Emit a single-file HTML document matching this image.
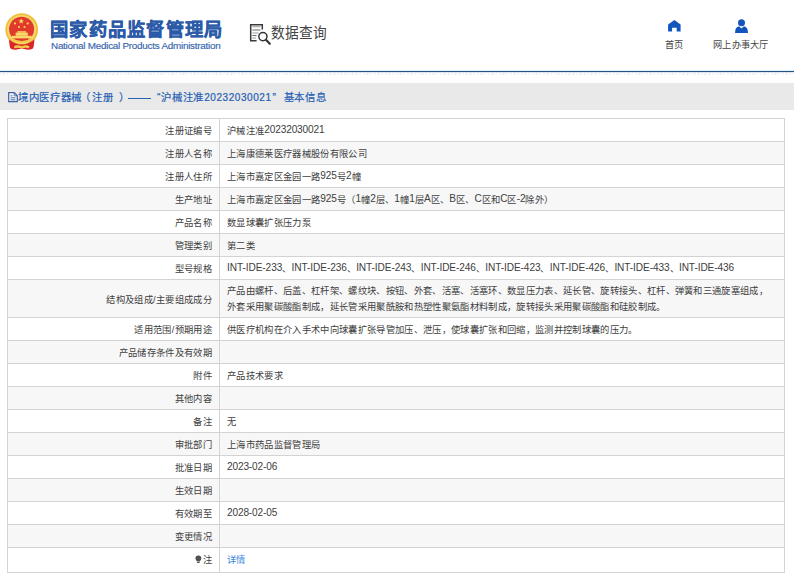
<!DOCTYPE html>
<html lang="zh-CN">
<head>
<meta charset="utf-8">
<style>
html,body{margin:0;padding:0;background:#fff;}
body{width:794px;height:580px;overflow:hidden;position:relative;font-family:"Liberation Sans",sans-serif;}
.abs{position:absolute;white-space:nowrap;}
#title{left:50px;top:16.5px;font-size:18.3px;font-weight:bold;color:#2b5aa8;line-height:26px;letter-spacing:1.25px;-webkit-text-stroke:0.35px #2b5aa8;}
#en{left:51px;top:40px;font-size:9.9px;color:#3563ad;line-height:12px;letter-spacing:-0.25px;-webkit-text-stroke:0.15px #3563ad;}
#sj{left:271px;top:20.5px;font-size:13.7px;color:#444;line-height:24px;transform:scaleY(1.08);transform-origin:0 4px;}
.nav{font-size:9.2px;color:#444;line-height:12px;margin-top:1.5px;}
#bar{position:absolute;left:0;top:83px;width:794px;height:27px;background:#e9e9e9;}
.bt{top:90px;font-size:10.4px;color:#2560b4;line-height:16px;letter-spacing:0.7px;-webkit-text-stroke:0.2px #2560b4;}
.bn{font-size:10px;letter-spacing:0.56px;}
#tbl{position:absolute;left:7px;top:118px;width:776px;border:1px solid #d3d3d3;}
.r{display:flex;height:22px;border-bottom:1px solid #d3d3d3;font-size:9.3px;color:#404040;white-space:nowrap;letter-spacing:0.33px;}
.n{font-size:10.1px;letter-spacing:-0.15px;position:relative;top:-0.3px;}
.int .n{letter-spacing:-0.08px;}
.r:nth-child(even){background:#f7f7f7;}
.r:last-child{border-bottom:none;height:23.5px;}
.r:last-child .l,.r:last-child .v{padding-bottom:1px;box-sizing:border-box;}
.l{width:211px;border-right:1px solid #d3d3d3;text-align:right;padding-right:7px;box-sizing:border-box;width:212px;display:flex;align-items:center;justify-content:flex-end;}
.v{flex:1;padding-left:7px;display:flex;align-items:center;}
.r2{height:37px;}
.r2 .v{line-height:16px;}
</style>
</head>
<body>
<!-- emblem -->
<svg class="abs" style="left:0;top:0" width="50" height="55" viewBox="0 0 50 55">
  <circle cx="21.7" cy="29.6" r="16.4" fill="#f0bf3a"/>
  <circle cx="21.7" cy="29.5" r="14.6" fill="#f7d76a"/>
  <circle cx="21.6" cy="29.2" r="12.5" fill="#e13a2c"/>
  <path d="M9 39.5 Q9.5 47 10.5 48.5 Q13 50 17 49.6 L21.7 48.6 L26.4 49.6 Q30.4 50 32.9 48.5 Q34 47 34.4 39.5 Q28 44.5 21.7 44.5 Q15.4 44.5 9 39.5 Z" fill="#d8262a"/>
  <path d="M11.5 38 Q21.7 44 32 38 L32.5 39.5 Q21.7 46 11 39.5 Z" fill="#f3c84a"/>
  <rect x="11.8" y="35.8" width="19.8" height="2.6" fill="#f7d868"/>
  <rect x="15.6" y="32.6" width="12.2" height="3.2" fill="#f7d868"/>
  <rect x="17.4" y="31.2" width="8.6" height="1.5" fill="#f7d868"/>
  <path d="M14 46.2 Q17.5 44.5 21.7 46.2 Q26 44.5 29.4 46.2 L29 48.2 Q25.5 47 21.7 48.4 Q18 47 14.4 48.2 Z" fill="#f3c84a"/>
  <path d="M21.2 18.4 L22.1 20.3 L24 20.4 L22.5 21.6 L23 23.5 L21.2 22.4 L19.4 23.5 L19.9 21.6 L18.4 20.4 L20.3 20.3 Z" fill="#f8d858"/>
  <circle cx="15" cy="23.4" r="1.05" fill="#f8d858"/>
  <circle cx="27.7" cy="23.4" r="1.05" fill="#f8d858"/>
  <circle cx="19" cy="27" r="1.05" fill="#f8d858"/>
  <circle cx="24.5" cy="27" r="1.05" fill="#f8d858"/>
</svg>
<div id="title" class="abs">国家药品监督管理局</div>
<div id="en" class="abs">National Medical Products Administration</div>

<!-- data query icon -->
<svg class="abs" style="left:249px;top:23px" width="24" height="23" viewBox="0 0 24 23">
  <path d="M13.3 6.6 V1.8 H1.7 V17.7 H7.6" fill="none" stroke="#3a3a3a" stroke-width="1.5"/>
  <path d="M3.4 3.7 H11.4 M3.4 10 H9.5 M3.4 15 H7" stroke="#999" stroke-width="1.1"/>
  <path d="M3.4 7 H11.4 M3.4 12.5 H7.5" stroke="#666" stroke-width="1.1"/>
  <circle cx="13.9" cy="13.6" r="4.1" fill="#fff" stroke="#333" stroke-width="1.5"/>
  <path d="M16.9 16.8 L20.8 20.7" stroke="#333" stroke-width="2.2" stroke-linecap="round"/>
</svg>
<div id="sj" class="abs">数据查询</div>

<!-- nav -->
<svg class="abs" style="left:667px;top:19px" width="15" height="14" viewBox="0 0 15 14">
  <path d="M7.4 1.1 L13.6 5.4 V12.6 H9.7 V8.8 H5.1 V12.6 H1.1 V5.4 Z" fill="#1256bd"/>
</svg>
<div class="abs nav" style="left:665px;top:37px">首页</div>
<svg class="abs" style="left:734px;top:18px" width="15" height="16" viewBox="0 0 15 16">
  <circle cx="7.5" cy="4.7" r="3.5" fill="#1256bd"/>
  <path d="M1 15 Q1 9 5 8.3 L7.5 10.6 L10 8.3 Q14 9 14 15 Z" fill="#1256bd"/>
</svg>
<div class="abs nav" style="left:713px;top:37px;letter-spacing:0.3px">网上办事大厅</div>

<div class="abs" style="left:0;top:68px;width:794px;height:2px;background:#fafefe;"></div>
<div class="abs" style="left:0;top:70px;width:794px;height:1px;background:#dcf0f2;"></div>
<div class="abs" style="left:0;top:71px;width:794px;height:1px;background:#2a5286;"></div>
<div class="abs" style="left:0;top:72px;width:794px;height:1px;background:#dfe6f2;"></div>
<div class="abs" style="left:0;top:73px;width:794px;height:2px;background:repeating-linear-gradient(135deg,#ececec 0 1px,#fefefe 1px 2.6px);"></div>
<div id="bar"></div>
<svg class="abs" style="left:8px;top:91.6px" width="10" height="12" viewBox="0 0 10 12">
  <path d="M0.7 0.7 H6.2 L9.3 3.8 V9.6 H0.7 Z" fill="#f2f6fc" stroke="#3f609c" stroke-width="1.2"/>
  <path d="M6.2 1 V3.8 H9" fill="none" stroke="#3f609c" stroke-width="0.8"/>
  <path d="M2.6 5.8 H7.4 M2.6 7.8 H7.4 M2.6 3.8 H4.4" stroke="#3f609c" stroke-width="0.9"/>
</svg>
<div class="abs bt" style="left:18px">境内医疗器械</div>
<div class="abs bt" style="left:80px">（</div>
<div class="abs bt" style="left:92.3px">注册</div>
<div class="abs bt" style="left:118.7px">）</div>
<div class="abs" style="left:128px;top:98px;width:22.7px;height:1px;background:#2862b5"></div>
<div class="abs bt" style="left:157px">“</div>
<div class="abs bt" style="left:161.3px">沪械注准</div>
<div class="abs bt bn" style="left:204.2px">20232030021</div>
<div class="abs bt" style="left:272.5px">”</div>
<div class="abs bt" style="left:283.5px">基本信息</div>

<div id="tbl">
<div class="r"><div class="l">注册证编号</div><div class="v">沪械注准<span class="n">20232030021</span></div></div>
<div class="r"><div class="l">注册人名称</div><div class="v">上海康德莱医疗器械股份有限公司</div></div>
<div class="r"><div class="l">注册人住所</div><div class="v">上海市嘉定区金园一路<span class="n">925</span>号<span class="n">2</span>幢</div></div>
<div class="r"><div class="l">生产地址</div><div class="v">上海市嘉定区金园一路<span class="n">925</span>号（<span class="n">1</span>幢<span class="n">2</span>层、<span class="n">1</span>幢<span class="n">1</span>层<span class="n">A</span>区、<span class="n">B</span>区、<span class="n">C</span>区和<span class="n">C</span>区<span class="n">-2</span>除外）</div></div>
<div class="r"><div class="l">产品名称</div><div class="v">数显球囊扩张压力泵</div></div>
<div class="r"><div class="l">管理类别</div><div class="v">第二类</div></div>
<div class="r"><div class="l">型号规格</div><div class="v int"><span class="n">INT-IDE-233</span>、<span class="n">INT-IDE-236</span>、<span class="n">INT-IDE-243</span>、<span class="n">INT-IDE-246</span>、<span class="n">INT-IDE-423</span>、<span class="n">INT-IDE-426</span>、<span class="n">INT-IDE-433</span>、<span class="n">INT-IDE-436</span></div></div>
<div class="r r2"><div class="l">结构及组成/主要组成成分</div><div class="v">产品由螺杆、后盖、杠杆架、螺纹块、按钮、外套、活塞、活塞环、数显压力表、延长管、旋转接头、杠杆、弹簧和三通旋塞组成，<br>外套采用聚碳酸酯制成，延长管采用聚酰胺和热塑性聚氨酯材料制成，旋转接头采用聚碳酸酯和硅胶制成。</div></div>
<div class="r"><div class="l">适用范围/预期用途</div><div class="v">供医疗机构在介入手术中向球囊扩张导管加压、泄压，使球囊扩张和回缩，监测并控制球囊的压力。</div></div>
<div class="r"><div class="l">产品储存条件及有效期</div><div class="v"></div></div>
<div class="r"><div class="l">附件</div><div class="v">产品技术要求</div></div>
<div class="r"><div class="l">其他内容</div><div class="v"></div></div>
<div class="r"><div class="l">备注</div><div class="v">无</div></div>
<div class="r"><div class="l">审批部门</div><div class="v">上海市药品监督管理局</div></div>
<div class="r"><div class="l">批准日期</div><div class="v"><span class="n">2023-02-06</span></div></div>
<div class="r"><div class="l">生效日期</div><div class="v"></div></div>
<div class="r"><div class="l">有效期至</div><div class="v"><span class="n">2028-02-05</span></div></div>
<div class="r"><div class="l">变更情况</div><div class="v"></div></div>
<div class="r"><div class="l"><svg width="6.8" height="8.6" viewBox="0 0 8 10" style="margin-right:1px;position:relative;top:0.5px"><path d="M4 0.5 C1.8 0.5 0.5 2 0.5 4 C0.5 5.5 1.8 6.3 2.3 7.5 H5.7 C6.2 6.3 7.5 5.5 7.5 4 C7.5 2 6.2 0.5 4 0.5 Z M2.5 8.2 H5.5 V9.5 H2.5 Z" fill="#505050"/></svg>注</div><div class="v" style="color:#3a86dc">详情</div></div>
</div>
</body>
</html>
